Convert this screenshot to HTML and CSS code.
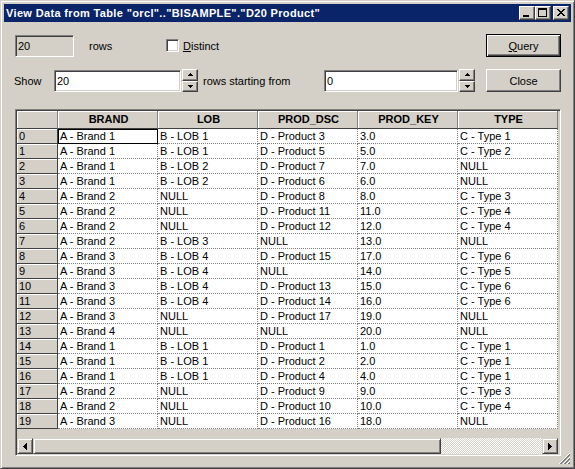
FILE: index.html
```html
<!doctype html>
<html lang="en">
<head>
<meta charset="utf-8">
<title>View Data</title>
<link rel="stylesheet" href="styles.css">
</head>
<body>
<div class="window">
  <div class="titlebar">
    <span class="title">View Data from Table "orcl".."BISAMPLE"."D20 Product"</span>
    <span class="tbtn"><svg width="14" height="12" shape-rendering="crispEdges"><rect x="3" y="8" width="6" height="2"/></svg></span>
    <span class="tbtn"><svg width="14" height="12" shape-rendering="crispEdges"><rect x="2" y="1" width="9" height="2"/><rect x="2" y="1" width="1" height="9"/><rect x="10" y="1" width="1" height="9"/><rect x="2" y="9" width="9" height="1"/></svg></span>
    <span class="tbtn close"><svg width="14" height="12" shape-rendering="crispEdges"><path d="M3 2h2v1h-2zM9 2h2v1h-2zM4 3h2v1h-2zM8 3h2v1h-2zM5 4h2v1h-2zM7 4h2v1h-2zM6 5h2v1h-2zM5 6h2v1h-2zM7 6h2v1h-2zM4 7h2v1h-2zM8 7h2v1h-2zM3 8h2v1h-2zM9 8h2v1h-2z"/></svg></span>
  </div>

  <div class="row row-top">
    <div class="field readonly">20</div>
    <span class="rows-label">rows</span>
    <span class="check"></span>
    <span class="check-label"><u>D</u>istinct</span>
    <button class="btn default"><u>Q</u>uery</button>
  </div>

  <div class="row row-show">
    <span class="show-label">Show</span>
    <div class="field edit show-count">20</div>
    <div class="spin">
      <span class="spin-btn"><svg width="5" height="3" shape-rendering="crispEdges"><path d="M2 0h1v1h1v1h1v1h-5v-1h1v-1h1z"/></svg></span>
      <span class="spin-btn"><svg width="5" height="3" shape-rendering="crispEdges"><path d="M0 0h5v1h-1v1h-1v1h-1v-1h-1v-1h-1z"/></svg></span>
    </div>
    <span class="from-label">rows starting from</span>
    <div class="field edit start-at">0</div>
    <div class="spin">
      <span class="spin-btn"><svg width="5" height="3" shape-rendering="crispEdges"><path d="M2 0h1v1h1v1h1v1h-5v-1h1v-1h1z"/></svg></span>
      <span class="spin-btn"><svg width="5" height="3" shape-rendering="crispEdges"><path d="M0 0h5v1h-1v1h-1v1h-1v-1h-1v-1h-1z"/></svg></span>
    </div>
    <button class="btn">Close</button>
  </div>

  <div class="grid-frame">
    <div class="grid">
      <div class="hd"></div><div class="hd">BRAND</div><div class="hd">LOB</div><div class="hd">PROD_DSC</div><div class="hd">PROD_KEY</div><div class="hd">TYPE</div>
      <div class="rh">0</div><div class="c focus">A - Brand 1</div><div class="c">B - LOB 1</div><div class="c">D - Product 3</div><div class="c">3.0</div><div class="c">C - Type 1</div>
      <div class="rh">1</div><div class="c">A - Brand 1</div><div class="c">B - LOB 1</div><div class="c">D - Product 5</div><div class="c">5.0</div><div class="c">C - Type 2</div>
      <div class="rh">2</div><div class="c">A - Brand 1</div><div class="c">B - LOB 2</div><div class="c">D - Product 7</div><div class="c">7.0</div><div class="c">NULL</div>
      <div class="rh">3</div><div class="c">A - Brand 1</div><div class="c">B - LOB 2</div><div class="c">D - Product 6</div><div class="c">6.0</div><div class="c">NULL</div>
      <div class="rh">4</div><div class="c">A - Brand 2</div><div class="c">NULL</div><div class="c">D - Product 8</div><div class="c">8.0</div><div class="c">C - Type 3</div>
      <div class="rh">5</div><div class="c">A - Brand 2</div><div class="c">NULL</div><div class="c">D - Product 11</div><div class="c">11.0</div><div class="c">C - Type 4</div>
      <div class="rh">6</div><div class="c">A - Brand 2</div><div class="c">NULL</div><div class="c">D - Product 12</div><div class="c">12.0</div><div class="c">C - Type 4</div>
      <div class="rh">7</div><div class="c">A - Brand 2</div><div class="c">B - LOB 3</div><div class="c">NULL</div><div class="c">13.0</div><div class="c">NULL</div>
      <div class="rh">8</div><div class="c">A - Brand 3</div><div class="c">B - LOB 4</div><div class="c">D - Product 15</div><div class="c">17.0</div><div class="c">C - Type 6</div>
      <div class="rh">9</div><div class="c">A - Brand 3</div><div class="c">B - LOB 4</div><div class="c">NULL</div><div class="c">14.0</div><div class="c">C - Type 5</div>
      <div class="rh">10</div><div class="c">A - Brand 3</div><div class="c">B - LOB 4</div><div class="c">D - Product 13</div><div class="c">15.0</div><div class="c">C - Type 6</div>
      <div class="rh">11</div><div class="c">A - Brand 3</div><div class="c">B - LOB 4</div><div class="c">D - Product 14</div><div class="c">16.0</div><div class="c">C - Type 6</div>
      <div class="rh">12</div><div class="c">A - Brand 3</div><div class="c">NULL</div><div class="c">D - Product 17</div><div class="c">19.0</div><div class="c">NULL</div>
      <div class="rh">13</div><div class="c">A - Brand 4</div><div class="c">NULL</div><div class="c">NULL</div><div class="c">20.0</div><div class="c">NULL</div>
      <div class="rh">14</div><div class="c">A - Brand 1</div><div class="c">B - LOB 1</div><div class="c">D - Product 1</div><div class="c">1.0</div><div class="c">C - Type 1</div>
      <div class="rh">15</div><div class="c">A - Brand 1</div><div class="c">B - LOB 1</div><div class="c">D - Product 2</div><div class="c">2.0</div><div class="c">C - Type 1</div>
      <div class="rh">16</div><div class="c">A - Brand 1</div><div class="c">B - LOB 1</div><div class="c">D - Product 4</div><div class="c">4.0</div><div class="c">C - Type 1</div>
      <div class="rh">17</div><div class="c">A - Brand 2</div><div class="c">NULL</div><div class="c">D - Product 9</div><div class="c">9.0</div><div class="c">C - Type 3</div>
      <div class="rh">18</div><div class="c">A - Brand 2</div><div class="c">NULL</div><div class="c">D - Product 10</div><div class="c">10.0</div><div class="c">C - Type 4</div>
      <div class="rh">19</div><div class="c">A - Brand 3</div><div class="c">NULL</div><div class="c">D - Product 16</div><div class="c">18.0</div><div class="c">NULL</div>
    </div>

    <div class="hscroll">
      <span class="arrow"><svg width="4" height="7" shape-rendering="crispEdges"><path d="M3 0h1v7h-1v-1h-1v-1h-1v-1h-1v-1h1v-1h1v-1h1z"/></svg></span>
      <span class="thumb"></span>
      <span class="track"></span>
      <span class="arrow"><svg width="4" height="7" shape-rendering="crispEdges"><path d="M0 0h1v1h1v1h1v1h1v1h-1v1h-1v1h-1v1h-1z"/></svg></span>
    </div>
  </div>

  <div class="grip">
    <svg width="12" height="12" shape-rendering="crispEdges">
      <path d="M11 0L0 11M11 4L4 11M11 8L8 11" stroke="#fff" fill="none"/>
      <path d="M11 1L1 11M11 2L2 11M11 5L5 11M11 6L6 11M11 9L9 11M11 10L10 11" stroke="#808080" fill="none"/>
    </svg>
  </div>
</div>
</body>
</html>
```

FILE: styles.css
```css
body {
  margin: 0;
  font-family: "Liberation Sans", Arial, sans-serif;
  font-size: 11px;
  color: #000;
  background: #d4d0c8;
}

.window {
  position: relative;
  width: 575px;
  height: 469px;
  box-sizing: border-box;
  background: #d4d0c8;
  border: 1px solid;
  border-color: #d4d0c8 #404040 #404040 #d4d0c8;
  box-shadow: inset 1px 1px #fff, inset -1px -1px #808080;
  padding: 3px;
  display: flex;
  flex-direction: column;
}

/* title bar */
.titlebar {
  height: 18px;
  background: #0a246a;
  color: #fff;
  display: flex;
  align-items: center;
  padding: 0 2px;
}
.title {
  flex: 1;
  font-weight: bold;
  letter-spacing: 0.35px;
  white-space: nowrap;
}
.tbtn {
  width: 16px;
  height: 14px;
  box-sizing: border-box;
  background: #d4d0c8;
  border: 1px solid;
  border-color: #fff #404040 #404040 #fff;
  box-shadow: inset -1px -1px #808080;
  display: flex;
}
.tbtn.close {
  margin-left: 2px;
}

/* controls */
.row {
  display: flex;
  align-items: center;
  height: 23px;
  margin-top: 12px;
}
.field {
  box-sizing: border-box;
  height: 22px;
  padding: 3px 0 0 2px;
  border: 1px solid;
  border-color: #808080 #fff #fff #808080;
  box-shadow: inset 1px 1px #404040, inset -1px -1px #d4d0c8;
  background: #fff;
  line-height: 14px;
}
.readonly {
  margin-left: 11px;
  width: 59px;
  background: #d4d0c8;
}
.rows-label {
  margin-left: 15px;
  width: 77px;
}
.check {
  width: 13px;
  height: 13px;
  box-sizing: border-box;
  border: 1px solid;
  border-color: #808080 #fff #fff #808080;
  box-shadow: inset 1px 1px #404040, inset -1px -1px #d4d0c8;
  background: #fff;
}
.check-label {
  margin-left: 4px;
}
.btn {
  margin-left: auto;
  margin-right: 10px;
  width: 75px;
  height: 23px;
  padding: 0;
  font: inherit;
  color: #000;
  background: #d4d0c8;
  border: 1px solid;
  border-color: #fff #404040 #404040 #fff;
  box-shadow: inset -1px -1px #808080;
}
.btn.default {
  border-color: #000;
  box-shadow: inset 1px 1px #fff, inset -1px -1px #404040, inset -2px -2px #808080;
}

.show-label {
  margin-left: 10px;
  width: 40px;
}
.show-count {
  width: 127px;
}
.start-at {
  width: 134px;
}
.spin {
  margin-left: 1px;
  width: 16px;
  height: 23px;
  display: flex;
  flex-direction: column;
}
.spin-btn {
  flex: 1;
  box-sizing: border-box;
  background: #d4d0c8;
  border: 1px solid;
  border-color: #fff #404040 #404040 #fff;
  box-shadow: inset -1px -1px #808080;
  display: flex;
  align-items: center;
  justify-content: center;
}
.from-label {
  margin-left: 5px;
  width: 121px;
}

/* data grid */
.grid-frame {
  margin: 17px 0 0 11px;
  width: 546px;
  height: 347px;
  box-sizing: border-box;
  border: 1px solid;
  border-color: #808080 #fff #fff #808080;
  box-shadow: inset 1px 1px #404040, inset -1px -1px #d4d0c8;
  padding: 1px;
  display: flex;
  flex-direction: column;
}
.grid {
  display: grid;
  grid-template-columns: 41px repeat(5, 100px);
  grid-template-rows: 18px repeat(20, 15px);
}
.grid > div {
  box-sizing: border-box;
  white-space: nowrap;
  overflow: hidden;
  line-height: 14px;
  padding-left: 2px;
}
.grid > .hd {
  font-weight: bold;
  text-align: center;
  line-height: 17px;
  border-right: 1px solid #808080;
  border-bottom: 1px solid #404040;
  box-shadow: inset 1px 1px #fff;
}
.rh {
  border-right: 1px solid #404040;
  border-bottom: 1px solid #404040;
  box-shadow: inset 1px 1px #fff;
}
.c {
  background: #fff;
  border-right: 1px dotted #808080;
  border-bottom: 1px dotted #808080;
}
.c.focus {
  border-right: 1px solid #000;
  border-bottom: 1px solid #000;
  box-shadow: inset 1px 1px #000;
}

.hscroll {
  margin-top: auto;
  width: 541px;
  height: 16px;
  display: flex;
}
.arrow, .thumb {
  box-sizing: border-box;
  height: 16px;
  background: #d4d0c8;
  border: 1px solid;
  border-color: #d4d0c8 #404040 #404040 #d4d0c8;
  box-shadow: inset 1px 1px #fff, inset -1px -1px #808080;
}
.arrow {
  width: 16px;
  display: flex;
  align-items: center;
  justify-content: center;
}
.thumb {
  width: 408px;
}
.track {
  flex: 1;
  background-image: repeating-conic-gradient(#fff 0 25%, #d4d0c8 0 50%);
  background-size: 2px 2px;
}

.grip {
  position: absolute;
  right: 3px;
  bottom: 3px;
  width: 12px;
  height: 12px;
}
```
